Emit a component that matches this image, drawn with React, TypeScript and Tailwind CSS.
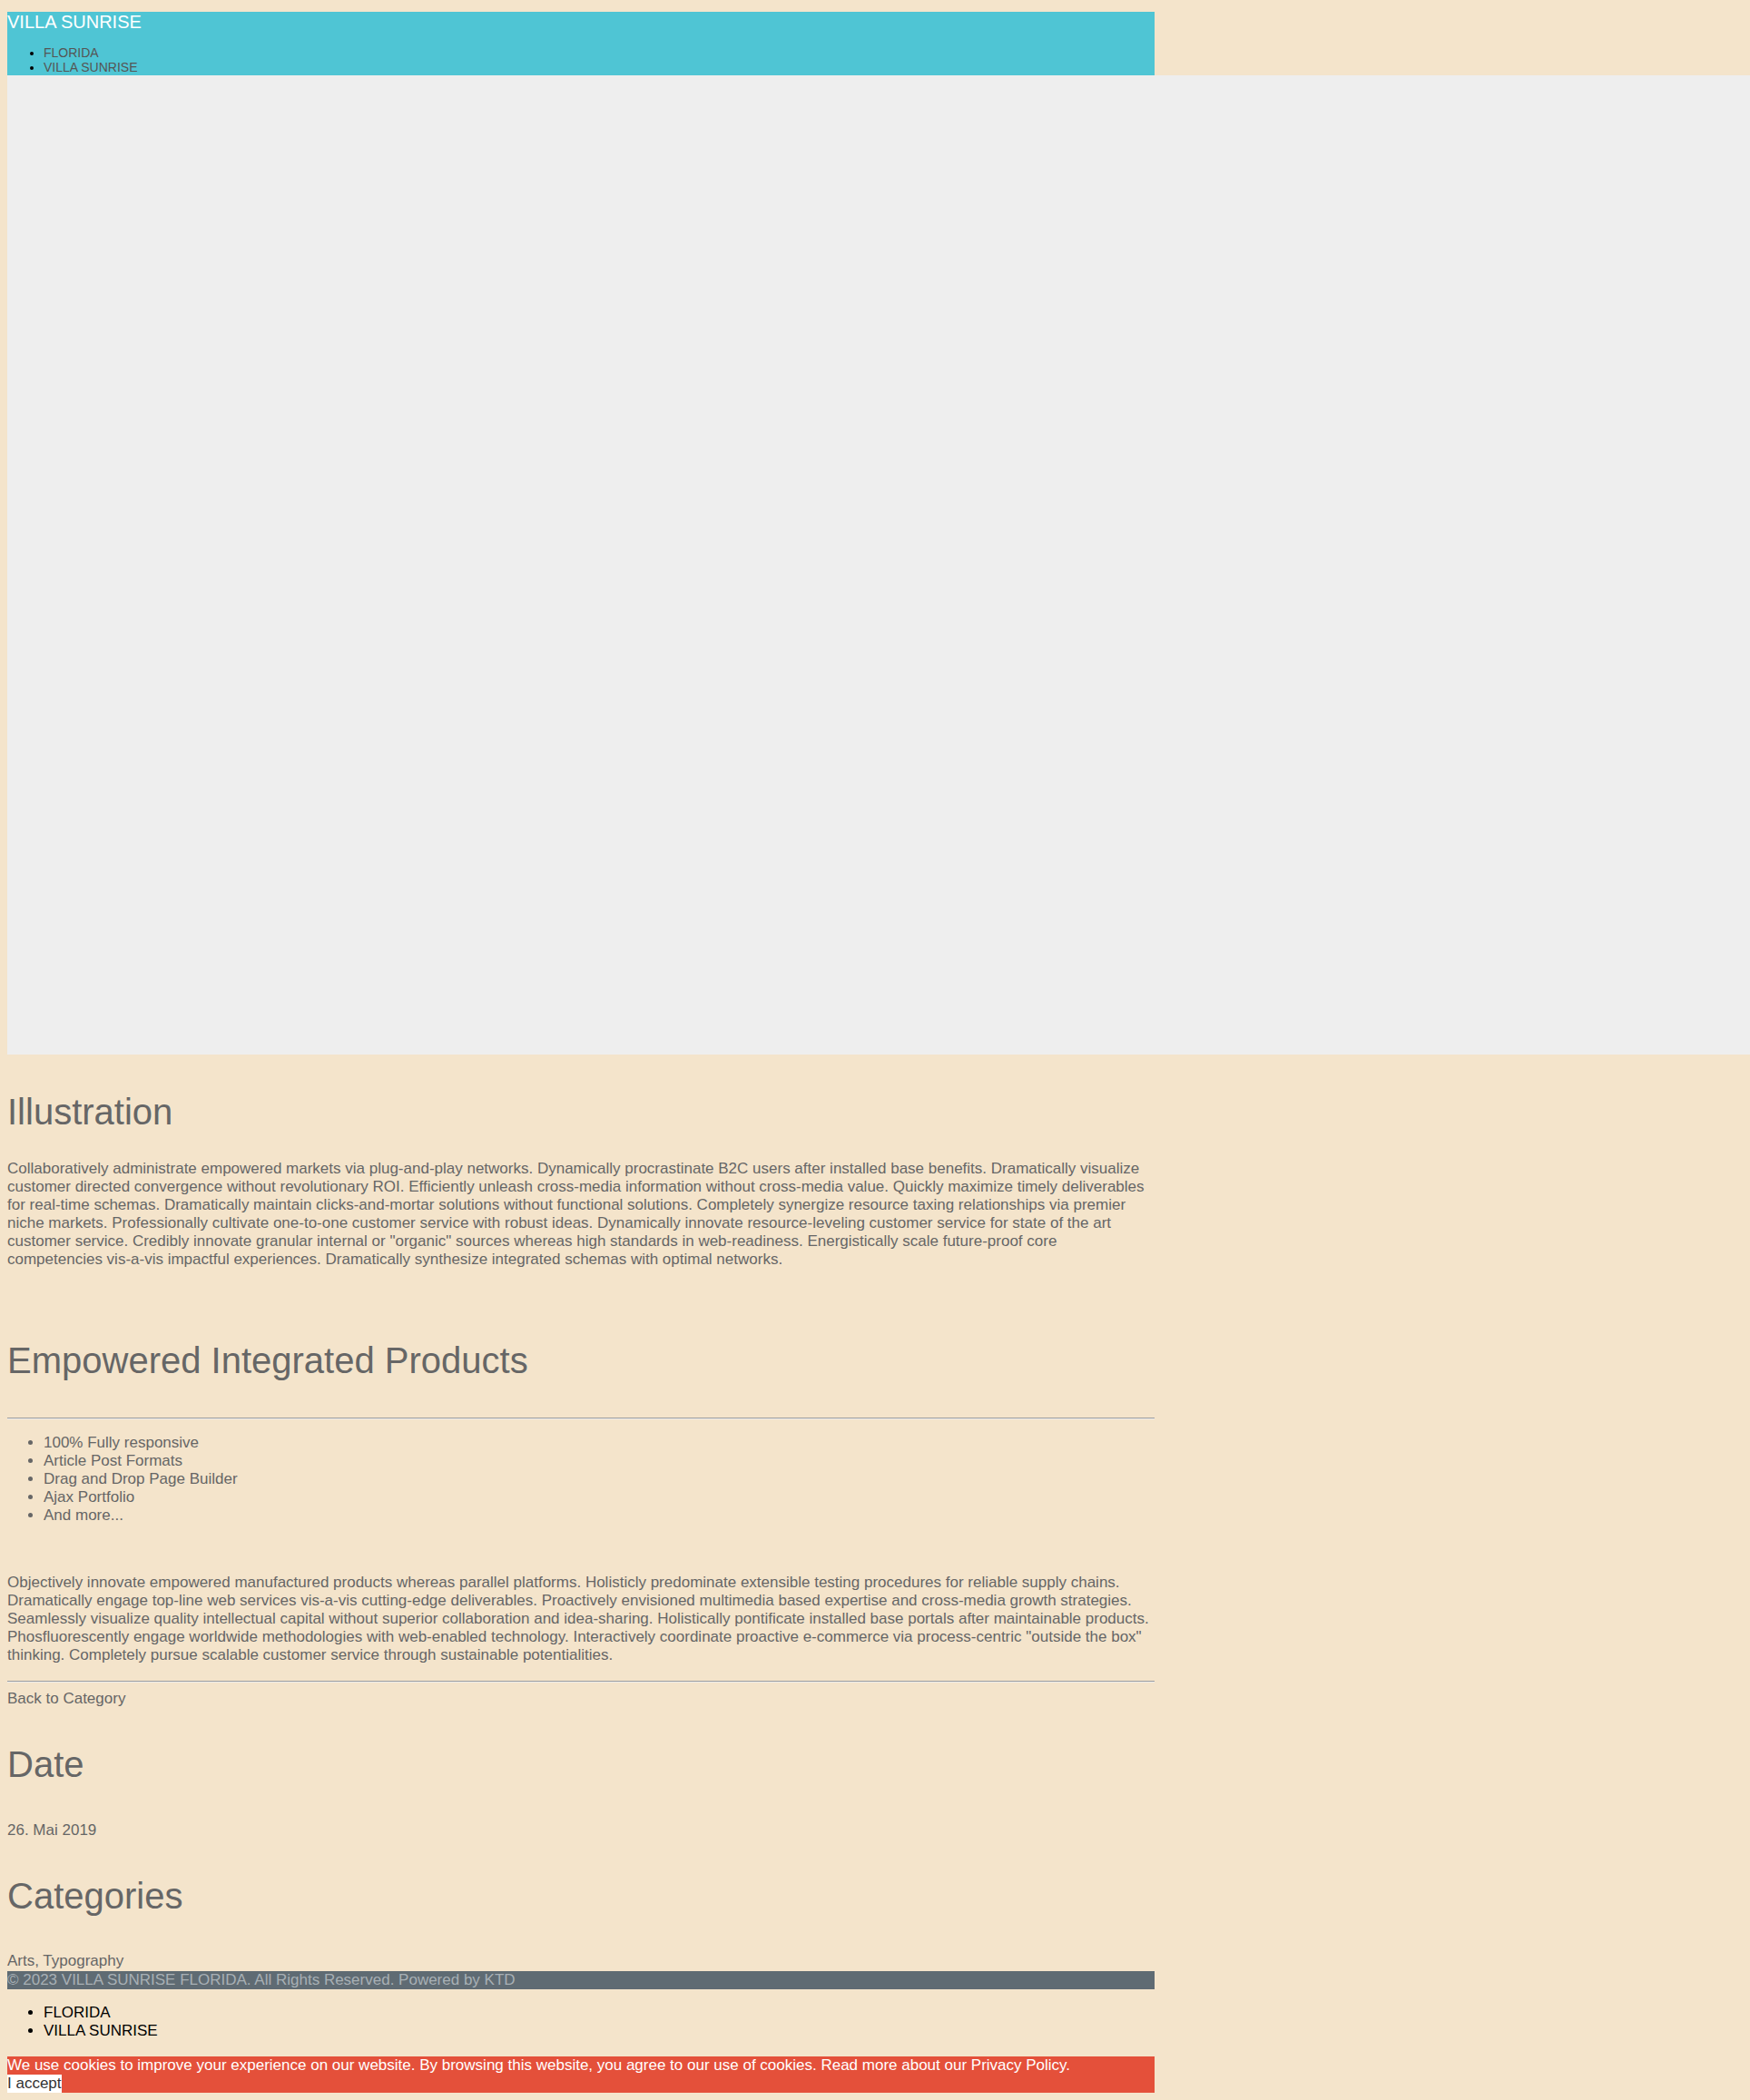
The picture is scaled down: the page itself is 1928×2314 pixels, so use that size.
import React from "react";

const para1 =
  'Collaboratively administrate empowered markets via plug-and-play networks. Dynamically procrastinate B2C users after installed base benefits. Dramatically visualize customer directed convergence without revolutionary ROI. Efficiently unleash cross-media information without cross-media value. Quickly maximize timely deliverables for real-time schemas. Dramatically maintain clicks-and-mortar solutions without functional solutions. Completely synergize resource taxing relationships via premier niche markets. Professionally cultivate one-to-one customer service with robust ideas. Dynamically innovate resource-leveling customer service for state of the art customer service. Credibly innovate granular internal or "organic" sources whereas high standards in web-readiness. Energistically scale future-proof core competencies vis-a-vis impactful experiences. Dramatically synthesize integrated schemas with optimal networks.';

const para2 =
  'Objectively innovate empowered manufactured products whereas parallel platforms. Holisticly predominate extensible testing procedures for reliable supply chains. Dramatically engage top-line web services vis-a-vis cutting-edge deliverables. Proactively envisioned multimedia based expertise and cross-media growth strategies. Seamlessly visualize quality intellectual capital without superior collaboration and idea-sharing. Holistically pontificate installed base portals after maintainable products. Phosfluorescently engage worldwide methodologies with web-enabled technology. Interactively coordinate proactive e-commerce via process-centric "outside the box" thinking. Completely pursue scalable customer service through sustainable potentialities.';

function Hr({ className = "" }: { className?: string }) {
  return (
    <div
      className={
        "h-0 w-full border-t border-b border-t-[#9d9d9d] border-b-[#ececec] " +
        className
      }
    />
  );
}

export default function App() {
  return (
    <div className="min-h-screen bg-[#f4e4cb] px-2 pt-[13px] pb-2 font-['Liberation_Sans',Arial,sans-serif] text-[17px] leading-[20px] text-[#666666]">
      <div className="w-[1264px]">
        <header className="h-[70px] bg-[#4fc5d4]">
          <div className="text-[20px] leading-[23px] text-white">VILLA SUNRISE</div>
          <ul className="mt-[14px] list-disc pl-10 text-[14px] leading-4 text-[#555555] marker:text-black">
            <li>FLORIDA</li>
            <li>VILLA SUNRISE</li>
          </ul>
        </header>
        <div className="h-[1079px] w-[1920px] bg-[#eeeeee]" />

        <h2 className="mt-[40px] text-[40px] leading-[46px] text-[#666666]">Illustration</h2>
        <p className="mt-[30px]">{para1}</p>

        <h2 className="mt-[78px] text-[40px] leading-[46px] text-[#666666]">
          Empowered Integrated Products
        </h2>
        <Hr className="mt-[40px]" />
        <ul className="mt-[16px] list-disc pl-10">
          <li>100% Fully responsive</li>
          <li>Article Post Formats</li>
          <li>Drag and Drop Page Builder</li>
          <li>Ajax Portfolio</li>
          <li>And more...</li>
        </ul>
        <p className="mt-[54px]">{para2}</p>
        <Hr className="mt-[18px]" />
        <div className="mt-[8px]">Back to Category</div>

        <h3 className="mt-[39px] text-[40px] leading-[46px]">Date</h3>
        <div className="mt-[40px]">26. Mai 2019</div>
        <h3 className="mt-[39px] text-[40px] leading-[46px]">Categories</h3>
        <div className="mt-[39px]">Arts, Typography</div>

        <footer className="mt-px bg-[#5f6b73] text-[#a8b0b5]">
          © 2023 VILLA SUNRISE FLORIDA. All Rights Reserved. Powered by KTD
        </footer>
        <ul className="mt-[16px] list-disc pl-10 text-black">
          <li>FLORIDA</li>
          <li>VILLA SUNRISE</li>
        </ul>

        <div className="mt-[18px] bg-[#e4503a] text-white">
          <div>
            We use cookies to improve your experience on our website. By browsing this website, you agree to our use of cookies. Read more about our Privacy Policy.
          </div>
          <button className="block bg-white p-0 text-[17px] leading-[20px] text-[#333333]">
            I accept
          </button>
        </div>
      </div>
    </div>
  );
}
